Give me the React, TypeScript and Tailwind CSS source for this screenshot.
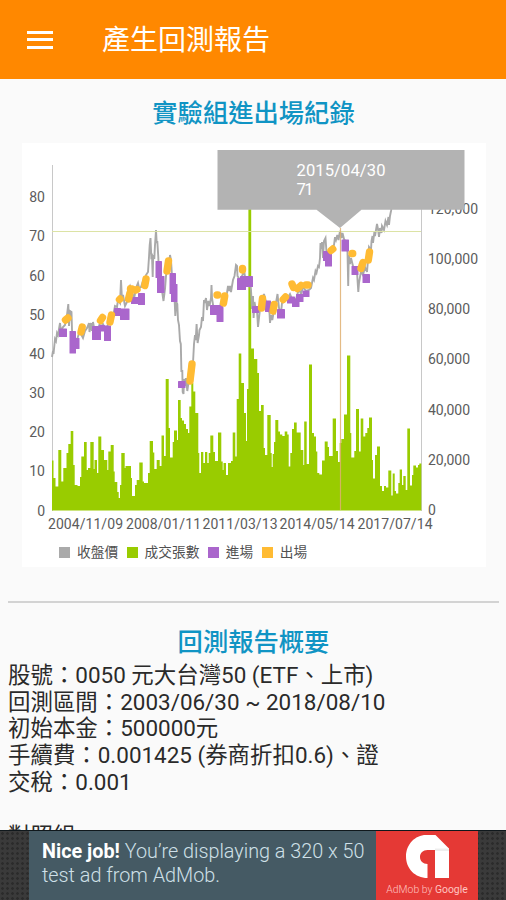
import React from 'react';

type Point = [number, number];
type Box = [number, number, number, number];

const BASELINE = 510.5;

// [left edge, top] of each trading volume bar, the next entry closes it
const volume: Point[] = [
  [52, 460.5], [53.5, 478], [55.5, 486.5], [58.3, 450], [61.3, 481.5], [63.3, 468], [66.5, 453], [68.3, 444],
  [70.7, 431], [73.3, 465], [74.7, 485], [77.5, 486], [80, 477], [81.3, 456.5], [84, 442], [86.7, 470], [88, 468],
  [90.3, 442], [93.7, 469], [94.5, 460], [97, 473], [98.3, 436.5], [101.3, 450], [104, 460], [107.3, 470],
  [108.3, 451.5], [110.7, 445], [113.7, 471.5], [114.7, 482], [117.3, 492], [118.7, 498], [120, 485], [121.3, 453],
  [124.7, 468], [125.5, 466], [131, 478], [132, 496], [135, 485], [136.7, 480], [139.3, 462.5], [142.7, 481.5],
  [144, 483], [148, 473], [149.7, 441], [153, 452.5], [154.3, 469], [156.7, 460], [159.7, 466], [161.5, 435.5],
  [164, 456], [165.7, 379], [168.7, 428], [170, 457.5], [172.7, 442], [174, 430.5], [177, 440], [178, 400],
  [180.7, 418], [182, 420.5], [184, 424], [186, 429], [188, 433], [189.3, 406.5], [191.3, 383], [193.3, 391.5],
  [195.3, 413], [198.3, 453], [199.3, 473], [201, 452], [203.3, 463], [205, 452], [207.3, 463], [208.7, 453],
  [210.3, 435.5], [213.3, 452], [215, 461], [218, 432.5], [221.3, 461.5], [222.7, 470], [223.5, 463], [226, 475],
  [228, 463], [231, 461], [232.7, 432.5], [235.3, 456.5], [236.7, 399], [238.7, 353.5], [241.3, 383], [244, 413],
  [246, 441], [247, 389], [248.4, 209], [251.2, 348.5], [254, 359], [257.3, 373], [259, 411], [261, 405],
  [263.7, 448], [265, 455], [267.3, 415], [270.7, 453], [271.7, 467], [272.7, 454], [274, 442], [275.3, 420],
  [278.3, 431.5], [280, 434.5], [282.3, 436], [284.7, 431.5], [287.3, 434.5], [288.7, 466.5], [290.3, 453],
  [292, 429], [294, 422.5], [296.7, 432.5], [300.7, 450], [303.3, 465], [304.2, 421.5], [306.7, 464], [309, 364.5],
  [312, 433], [314, 436.5], [316, 451.5], [317.3, 473], [319.3, 474.5], [322, 460.5], [324.7, 441.5], [327.7, 447],
  [329, 456], [332.7, 418.5], [336, 451], [338, 462], [339.7, 443], [341.3, 439], [344, 414.5], [347, 355.5],
  [350.3, 433], [351.3, 457.5], [354.3, 451], [356, 409], [359, 451.5], [360.7, 418.5], [363.3, 436.5], [365.3, 433],
  [367.3, 428], [369, 417.5], [372, 460], [373, 478.5], [375, 455], [377, 446.5], [380, 486], [382, 491],
  [384, 486], [386, 487.5], [388.3, 470.5], [391.3, 495.5], [392.7, 473.5], [394.7, 491], [396, 493.5],
  [398.3, 483], [399.7, 469.5], [402, 485], [403.3, 476], [405.7, 490], [407.3, 428.5], [410, 485.5], [412, 475],
  [413.3, 465.5], [416, 467.5], [418, 465], [419.3, 463.5], [421.3, 463.5],
];

// closing price
const price: Point[] = [
  [52, 357], [53, 351], [53.5, 354], [55, 339], [56, 341], [57, 333], [58, 335], [60, 323], [61, 331], [63, 327],
  [65, 325], [67, 315], [68.3, 304], [69, 326], [70, 311], [71.5, 312], [72, 330], [73, 341], [75, 347], [77, 340],
  [79, 333], [81, 334], [83, 338], [85, 331], [87, 328], [89, 323], [89.5, 332], [91, 323], [92, 331], [93, 322],
  [95, 333], [98, 329], [100, 323], [103, 324], [106, 332], [108, 324], [110, 316], [113, 317], [115, 306],
  [117, 307], [118, 300], [120, 303], [121, 280], [122, 300], [123, 295], [125, 306], [127, 302], [128, 290],
  [130, 286], [132, 292], [134, 299], [136, 288], [138, 283], [139, 288], [141, 287], [143, 281], [145, 282],
  [146, 275], [148, 272], [149, 257], [149.7, 245], [150.5, 238], [151.3, 257], [152, 256], [152.7, 277],
  [153.2, 255], [154.3, 259], [155, 245], [156, 230], [156.7, 243], [157.3, 241], [158.3, 257], [159, 275],
  [161, 282], [162, 291], [163.5, 301], [165, 289], [166, 276], [168, 262], [169, 265], [170, 255], [171, 260],
  [172, 276], [173, 289], [174.5, 297], [175.3, 316], [176.3, 302], [177.3, 304], [178, 320], [179, 325],
  [180, 341], [180.8, 344], [181.4, 371], [182.3, 371], [182.7, 392], [183.5, 394], [184, 379], [185, 386],
  [186, 378], [187.3, 391], [189, 379], [191, 373], [193, 363], [194, 344], [195, 335], [195.7, 340], [196.6, 324],
  [197.6, 343], [199, 335], [199.5, 330], [201, 327], [202, 317], [203, 321], [204, 300], [204.5, 303], [206, 298],
  [207, 310], [208.3, 301], [209.5, 306], [211, 298], [211.5, 285], [212, 298], [213.5, 308], [216, 311],
  [219, 312], [221, 302], [224, 301], [227, 293], [228, 286], [229, 291], [230, 286], [231, 292], [233, 280],
  [234.5, 276], [236, 265], [237, 266], [237.5, 276], [240, 280], [243, 274], [243.5, 266], [245, 277], [248, 281],
  [250, 283], [251, 290], [252, 309], [253, 296], [253.6, 318], [254.5, 302], [256, 311], [257, 310], [258, 327],
  [259, 318], [260, 309], [262, 303], [264, 294], [266, 302], [268, 308], [269.5, 313], [270, 323], [271, 315],
  [272.3, 320], [274, 310], [275, 312], [276, 303], [277.5, 294], [279, 308], [281, 313], [282, 303], [284, 302],
  [287, 299], [290, 294], [293, 301], [296, 299], [299, 289], [301, 294], [303, 287], [306, 291], [309, 290],
  [311, 288], [313, 278], [314, 280], [315.5, 271], [316.5, 273], [318, 266], [319, 267], [320, 258], [320.5, 243],
  [321.2, 249], [322, 242], [323, 258], [324, 241], [325.5, 238], [326.5, 252], [328, 257], [330, 253], [332, 247],
  [334, 245], [335, 237], [336, 240], [337.3, 235], [338.5, 240], [340, 231], [341.5, 238], [342.5, 233],
  [344, 239], [346, 242], [347.5, 252], [348.2, 286], [348.8, 255], [350, 264], [351, 258], [353, 266], [355, 269],
  [357, 272], [358.3, 292], [359, 283], [361, 271], [363, 275], [365, 267], [367, 272], [368, 260], [369, 247],
  [371, 250], [371.5, 241], [372.5, 236], [373, 243], [374.5, 231], [375, 236], [377, 224], [378, 229], [379, 237],
  [380, 228], [381.5, 233], [382, 226], [384, 230], [385.5, 221], [387, 225], [388.5, 217], [389, 225], [390, 216],
  [391, 211], [392, 205],
];

const entries: Box[] = [
  [59, 328.5, 8, 8.5], [69.5, 331, 6.5, 22.5], [74, 338, 5.5, 11], [92, 326, 9, 14], [99, 325, 6, 6.5],
  [104, 325.5, 7, 15.5], [114, 308, 7, 8], [120, 308.5, 9.5, 11.5], [131, 297, 9, 7], [138, 293, 7, 12],
  [155.5, 261, 6.5, 17], [157, 276, 7.5, 17], [169.5, 273, 6.5, 21], [171, 284, 6.5, 18], [178, 381, 7.5, 7],
  [210, 305, 13, 10], [216.5, 307, 7, 15], [240, 276, 13, 11], [237, 278, 9, 12], [252, 306, 7, 7],
  [265, 300.5, 6, 11.5], [277, 309, 8, 9.5], [287, 296.5, 8, 7], [292, 298.5, 7.5, 8.5], [296, 294, 7.5, 8],
  [302.5, 290.5, 7, 6.5], [323, 251, 7, 10], [325, 253, 7, 13.5], [341.5, 239.5, 7.5, 12], [351.5, 266, 7, 9],
  [362.5, 274, 7.5, 9],
];

// exits are drawn as short strokes with round caps: x1, y1, x2, y2
const exits: Box[] = [
  [65.5, 320, 68, 318], [81, 332, 82.2, 327], [100.5, 320.5, 102.5, 317.5], [110, 322, 111.5, 315],
  [119.5, 299.5, 120, 299], [128.5, 299, 130, 293], [130.5, 288.8, 132, 289], [136, 290, 137, 289.5],
  [144.8, 285.5, 146, 279], [167, 271, 168.5, 261], [217, 295, 217.8, 295], [223.5, 303, 224.7, 296],
  [242.5, 268.5, 242.5, 270], [261.5, 308, 262.5, 298.5], [273, 311, 274.2, 304.5], [283.2, 299.5, 285.5, 297],
  [292, 284, 293.5, 287.5], [297.5, 288.5, 301, 285.5], [306, 285, 308, 285], [331, 250.5, 332.8, 249],
  [352, 253.5, 352.7, 253.5], [361, 268.5, 363, 262.5], [368.3, 260, 369.5, 252], [190, 381, 192, 364],
];

const leftTicks = [0, 10, 20, 30, 40, 50, 60, 70, 80];
const rightTicks = ['0', '20,000', '40,000', '60,000', '80,000', '100,000', '120,000'];
const dates: [string, number][] = [
  ['2004/11/09', 48], ['2008/01/11', 126], ['2011/03/13', 202.5], ['2014/05/14', 279.5], ['2017/07/14', 357.5],
];

const summary = [
  '股號：0050 元大台灣50 (ETF、上市)',
  '回測區間：2003/06/30 ~ 2018/08/10',
  '初始本金：500000元',
  '手續費：0.001425 (券商折扣0.6)、證',
  '交稅：0.001',
];

const volumePath =
  `M${volume[0][0]} ${BASELINE}` + volume.map(([x, y]) => `H${x}V${y}`).join('') + `V${BASELINE}Z`;

const BacktestChart: React.FC = () => (
  <svg
    className="block h-[395px] w-[464px] font-['Roboto','Noto_Sans_CJK_TC',sans-serif]"
    viewBox="22 143 464 395"
  >
    <g fill="#5c5c5c" fontSize="14">
      {leftTicks.map((tick) => (
        <text key={tick} x="45" y={515.5 - tick * 3.915} textAnchor="end">{tick}</text>
      ))}
      {rightTicks.map((tick, i) => (
        <text key={tick} x="428" y={515 - i * 50.2} textLength={[8, 42, 42, 42, 42, 50, 50][i]}>{tick}</text>
      ))}
      {dates.map(([date, x]) => (
        <text key={date} x={x} y="529" textLength="75">{date}</text>
      ))}
    </g>
    <path d="M52.5 165V511M421.5 165V511" stroke="#c8c8c8" />
    <path d={volumePath} fill="#99cc00" />
    <polyline points={price.map((p) => p.join(',')).join(' ')} fill="none" stroke="#a9a9a9" strokeWidth="1.9" />
    <path d="M52 231.5H421" stroke="#dce3a5" />
    <path d="M340.5 228V510" stroke="#e0b070" strokeWidth="1.2" opacity="0.85" />
    {entries.map(([x, y, w, h]) => (
      <rect key={`${x}-${y}`} x={x} y={y} width={w} height={h} rx="0.6" fill="#aa66cc" />
    ))}
    {exits.map(([x1, y1, x2, y2]) => (
      <line
        key={`${x1}-${y1}`}
        x1={x1} y1={y1} x2={x2} y2={y2}
        stroke="#ffbb33" strokeWidth="7.4" strokeLinecap="round"
      />
    ))}
    {/* Marker for the selected day */}
    <path d="M217.5 150H464.5V209.8H361.5L340 228L316.5 209.8H217.5Z" fill="#b3b3b3" />
    <g fill="#fff" fontSize="16.6">
      <text x="296.5" y="175.5" textLength="89">2015/04/30</text>
      <text x="296.5" y="195.3" textLength="17">71</text>
    </g>
  </svg>
);

const LegendItem: React.FC<{ label: string; swatch: string }> = ({ label, swatch }) => (
  <div className="flex items-center gap-[7px]">
    <span className={`size-[11px] ${swatch}`} />
    <span>{label}</span>
  </div>
);

const AdBanner: React.FC = () => (
  <div className="relative flex h-[70px] shrink-0 border-t border-[#10181c] bg-[#3a3a3a] bg-[radial-gradient(circle,#2b2b2b_1px,transparent_1.6px)] bg-[size:5px_5px] pl-[29px]">
    <div className="w-[347px] bg-[#455a64] pt-[9px] pl-[13px] text-[19.8px] leading-[23.7px] font-light whitespace-nowrap text-[#cfe0e8]">
      <p><b className="font-bold text-white">Nice job!</b> You’re displaying a 320 x 50</p>
      <p>test ad from AdMob.</p>
    </div>
    <div className="flex w-[102px] flex-col items-center bg-[#e53935] pt-1">
      <svg className="h-[43px] w-[43px]" viewBox="0 0 43 43">
        <path
          d="M21.5 43C9 43 0 33.5 0 21.5S9 0 20 0H29.5L43 13.5V43H29V15H21.5C17 15 14 18 14 22C14 26 17 29 21.5 29Z"
          fill="#fff"
        />
        <path d="M29 13.5H43V16H29Z" fill="#eee" />
      </svg>
      <p className="mt-[4px] text-[10.4px] leading-[15px] font-light whitespace-nowrap text-[#ffc4c0]">
        AdMob by <span className="font-normal">Google</span>
      </p>
    </div>
  </div>
);

export default function App() {
  return (
    <div className="flex h-[900px] w-[506px] flex-col overflow-hidden bg-[#fafafa] font-['Roboto','Noto_Sans_CJK_TC',sans-serif]">
      <header className="flex h-[79px] shrink-0 items-center bg-[#ff8800] pl-[27px] text-white">
        <button className="flex w-[26px] flex-col gap-[4.5px]" aria-label="Menu">
          <span className="h-[3px] bg-white" />
          <span className="h-[3px] bg-white" />
          <span className="h-[3px] bg-white" />
        </button>
        <h1 className="pt-[3px] pl-[49px] text-[28px] leading-10">產生回測報告</h1>
      </header>

      <main className="min-h-0 flex-1 overflow-hidden">
        <h2 className="pt-[17px] pl-px text-center text-[25.3px] leading-9 font-medium text-[#1094c4]">
          實驗組進出場紀錄
        </h2>

        <section className="mt-[11px] ml-[22px] h-[424px] w-[464px] bg-white">
          <BacktestChart />
          <div className="flex items-center gap-[8.5px] pt-1 pl-[37px] text-[13.7px] leading-5 text-[#505050]">
            <LegendItem label="收盤價" swatch="bg-[#aaaaaa]" />
            <LegendItem label="成交張數" swatch="bg-[#99cc00]" />
            <LegendItem label="進場" swatch="bg-[#aa66cc]" />
            <LegendItem label="出場" swatch="bg-[#ffbb33]" />
          </div>
        </section>

        <hr className="mr-[7px] ml-2 mt-[34px] border-t-2 border-[#d3d3d3]" />

        <h2 className="mt-[22px] pl-px text-center text-[25.3px] leading-9 font-medium text-[#1094c4]">
          回測報告概要
        </h2>
        <div className="px-2 pt-px text-[22.45px] leading-[26.7px] whitespace-nowrap text-[#2a2a2a]">
          {summary.map((line) => (
            <p key={line}>{line}</p>
          ))}
          <p className="pt-[27px]">對照組</p>
        </div>
      </main>

      <AdBanner />
    </div>
  );
}
